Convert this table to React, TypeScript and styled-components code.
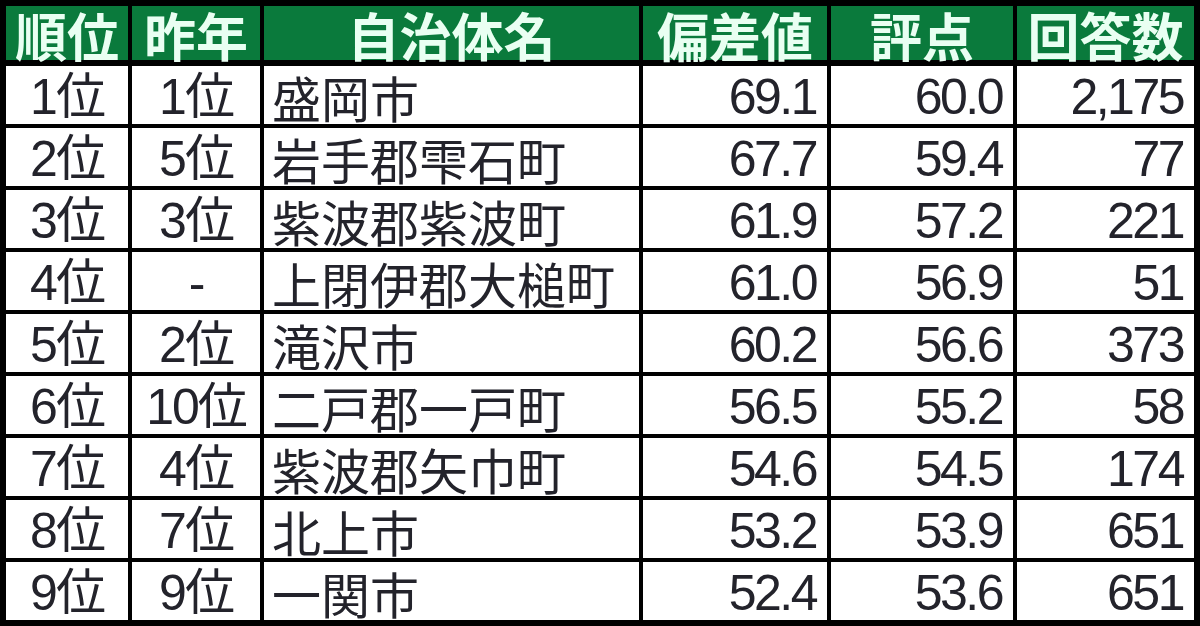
import styled, { createGlobalStyle } from "styled-components";

const GlobalStyle = createGlobalStyle`
  html, body {
    margin: 0;
    padding: 0;
    background: #000;
  }
  body {
    font-family: "Liberation Sans", "Noto Sans CJK JP", sans-serif;
  }
`

const Table = styled.div`
  display: grid;
  grid-template-columns: 122px 128px 375px 184px 182px 177px;
  grid-template-rows: 56px repeat(9, 58px);
  gap: 4px;
  padding: 6px;
  width: 1200px;
  height: 626px;
  box-sizing: border-box;
  background: #000;
`

const HeadCell = styled.div`
  display: flex;
  align-items: center;
  justify-content: center;
  background: #0a7a3c;
  border-bottom: 2px solid #000;
  box-sizing: border-box;
  color: #e9fff2;
  font-family: "Noto Sans CJK JP", sans-serif;
  font-weight: 700;
  font-size: 52px;
  line-height: 1;
  padding-top: 4px;
`

type Align = "center" | "left" | "right"

const Cell = styled.div<{ $align: Align }>`
  display: flex;
  align-items: center;
  justify-content: ${({ $align }) =>
    $align === "left" ? "flex-start" : $align === "right" ? "flex-end" : "center"};
  padding: ${({ $align }) =>
    $align === "left" ? "0 0 0 8px" : $align === "right" ? "0 11px 0 0" : "0"};
  background: #fff;
  color: #23232b;
  font-size: 50px;
  line-height: 1;
  white-space: nowrap;
  overflow: hidden;
`

const Num = styled.span`
  letter-spacing: -2.5px;
  padding-top: 3px;
`

const Name = styled.span`
  font-family: "Noto Sans CJK JP", sans-serif;
  font-size: 49px;
  padding-top: 2px;
`

const Rank = styled.span`
  padding-top: 3px;
  letter-spacing: -2px;
`

interface Row {
  rank: string
  prev: string
  name: string
  dev: string
  score: string
  count: string
}

const rows: Array<Row> = [
  { rank: "1位", prev: "1位", name: "盛岡市", dev: "69.1", score: "60.0", count: "2,175" },
  { rank: "2位", prev: "5位", name: "岩手郡雫石町", dev: "67.7", score: "59.4", count: "77" },
  { rank: "3位", prev: "3位", name: "紫波郡紫波町", dev: "61.9", score: "57.2", count: "221" },
  { rank: "4位", prev: "-", name: "上閉伊郡大槌町", dev: "61.0", score: "56.9", count: "51" },
  { rank: "5位", prev: "2位", name: "滝沢市", dev: "60.2", score: "56.6", count: "373" },
  { rank: "6位", prev: "10位", name: "二戸郡一戸町", dev: "56.5", score: "55.2", count: "58" },
  { rank: "7位", prev: "4位", name: "紫波郡矢巾町", dev: "54.6", score: "54.5", count: "174" },
  { rank: "8位", prev: "7位", name: "北上市", dev: "53.2", score: "53.9", count: "651" },
  { rank: "9位", prev: "9位", name: "一関市", dev: "52.4", score: "53.6", count: "651" },
]

const headers = ["順位", "昨年", "自治体名", "偏差値", "評点", "回答数"]

export default function App() {
  return (
    <>
      <GlobalStyle />
      <Table>
        {headers.map((h) => (
          <HeadCell key={h}>{h}</HeadCell>
        ))}

        {rows.map((r) => (
          <>
            <Cell key={r.rank + "a"} $align="center"><Rank>{r.rank}</Rank></Cell>
            <Cell key={r.rank + "b"} $align="center"><Rank>{r.prev}</Rank></Cell>
            <Cell key={r.rank + "c"} $align="left"><Name>{r.name}</Name></Cell>
            <Cell key={r.rank + "d"} $align="right"><Num>{r.dev}</Num></Cell>
            <Cell key={r.rank + "e"} $align="right"><Num>{r.score}</Num></Cell>
            <Cell key={r.rank + "f"} $align="right"><Num>{r.count}</Num></Cell>
          </>
        ))}
      </Table>
    </>
  )
}
